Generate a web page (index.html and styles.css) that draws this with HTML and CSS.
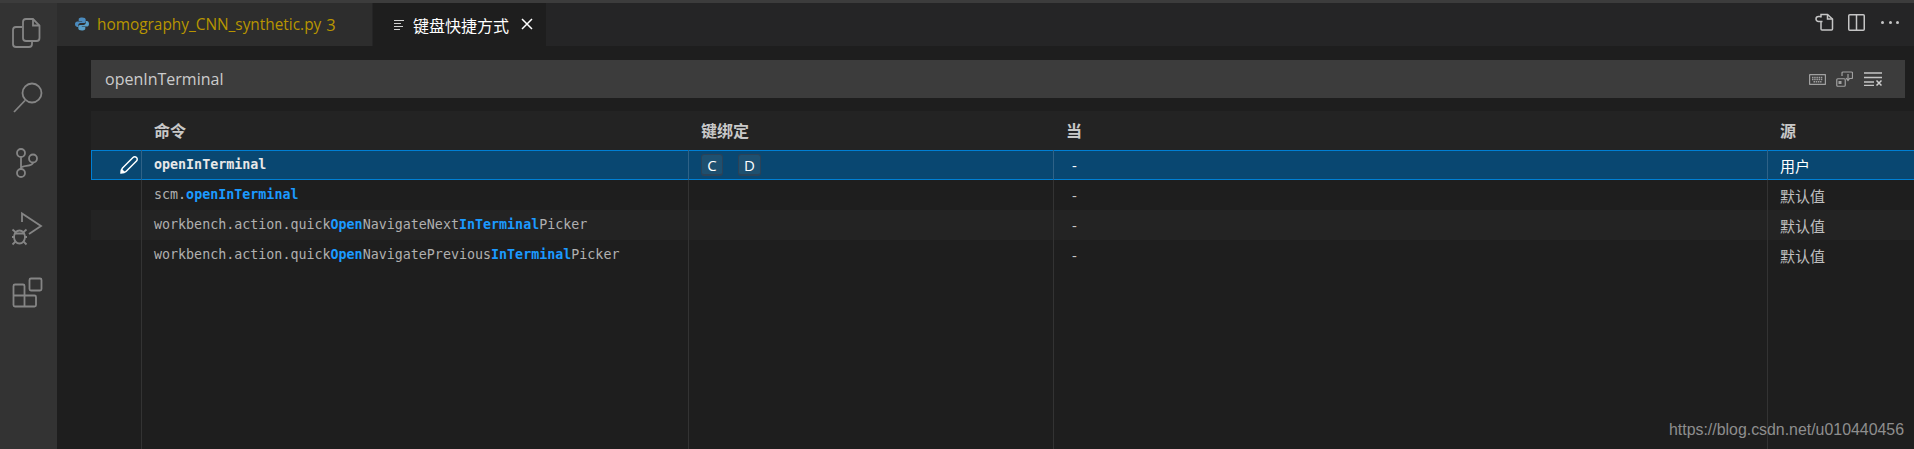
FILE: index.html
```html
<!DOCTYPE html>
<html lang="zh">
<head>
<meta charset="utf-8">
<title>键盘快捷方式</title>
<link rel="stylesheet" href="styles.css">
</head>
<body>
<div class="titlestrip"></div>
<div class="workbench">
  <nav class="activity">
    <svg class="act first" viewBox="0 3 57 62"><path d="M22 27h-6a3 3 0 0 0-3 3v14a3 3 0 0 0 3 3h13a3 3 0 0 0 3-3v-3"/><path d="M23 38V22a3 3 0 0 1 3-3h7l6.500 6.500V38a3 3 0 0 1-3 3H26a3 3 0 0 1-3-3z"/><path d="M33 19v6.500h6.500"/></svg>
    <svg class="act" viewBox="0 65 57 65"><circle cx="32" cy="93" r="9.500"/><path d="M25 100.500 14 112"/></svg>
    <svg class="act" viewBox="0 130 57 65"><circle cx="21" cy="153" r="4"/><circle cx="33" cy="158.500" r="4"/><circle cx="21" cy="173" r="4"/><path d="M21 157v12M21 168c1-3 12-1 12-5.500"/></svg>
    <svg class="act" viewBox="0 195 57 65"><path d="M22 222v-8.500L41 226l-12 8"/><ellipse cx="19.500" cy="237" rx="5.500" ry="6.500"/><path d="M14.500 233.500h10M12.500 229.500l3.500 3M26.500 229.500l-3.500 3M12 237h3M24 237h3M12.500 244.500l3-3M26.500 244.500l-3-3"/></svg>
    <svg class="act" viewBox="0 260 57 65"><rect x="29.500" y="278.500" width="12" height="12" rx="1.500"/><path d="M24.500 295.500V286a1.500 1.500 0 0 0-1.500-1.500h-8a1.500 1.500 0 0 0-1.500 1.500v19a1.500 1.500 0 0 0 1.500 1.500h19.500a1.500 1.500 0 0 0 1.500-1.500v-8a1.500 1.500 0 0 0-1.500-1.500zM13.500 295.500h11v11"/></svg>
  </nav>
  <main class="editor">
    <header class="tabbar">
      <div class="tab tab-file">
        <svg class="py" viewBox="0 0 14 14"><path class="py-a" d="M7 .5C4 .5 3.700 1.600 3.700 2.500v1.400h3.500v.6H2.300C1 4.500 0 5.500 0 7.100c0 1.700.9 2.800 2.200 2.800h1V8.300c0-1.200 1-2.300 2.300-2.300H9c1 0 1.700-.8 1.700-1.800V2.500C10.700 1.200 9.500.5 7 .5z"/><path class="py-b" d="M7 13.500c3 0 3.300-1.100 3.300-2v-1.400H6.800v-.6h4.900c1.300 0 2.300-1 2.300-2.600 0-1.700-.9-2.800-2.200-2.800h-1v1.600c0 1.200-1 2.300-2.300 2.300H5c-1 0-1.700.8-1.700 1.800v1.700c0 1.300 1.200 2 3.700 2z"/></svg>
        <span class="tab-name">homography_CNN_synthetic.py</span>
        <span class="tab-count">3</span>
      </div>
      <div class="tab tab-active">
        <svg class="lines" viewBox="0 0 10 12"><path d="M0 1.500h10M0 4.500h7M0 7.500h9M0 10.500h6"/></svg>
        <span class="tab-title">键盘快捷方式</span>
        <svg class="close" viewBox="0 0 14 14"><path d="M2 2l10 10M12 2 2 12"/></svg>
      </div>
      <div class="tab-actions">
        <svg class="ta ta-open" viewBox="0 0 20 18"><path d="M6 4.500V1.500h6.500l5 4.500v10a1 1 0 0 1-1 1H7a1 1 0 0 1-1-1V8"/><path d="M12.500 1.500V6h5"/><path d="M7.500 8.500H3.500a2.500 2.500 0 0 1 0-5H6"/></svg>
        <svg class="ta ta-split" viewBox="0 0 17 17"><rect x=".75" y=".75" width="15.500" height="15.500" rx="1"/><path d="M8.500 1v15"/></svg>
        <div class="dots"><i></i><i></i><i></i></div>
      </div>
    </header>
    <section class="keys">
      <div class="searchbox">
        <span class="query">openInTerminal</span>
        <div class="search-actions">
          <svg class="sa sa-kb" viewBox="0 0 17 11"><rect x=".5" y=".5" width="16" height="10" rx="1"/><path d="M3 3.500h11M3 5.500h11M4.500 7.800h8" stroke-dasharray="1.500 .7"/></svg>
          <svg class="sa sa-rec" viewBox="0 0 17 16"><rect x=".75" y="7.750" width="8.500" height="7.500" rx="1"/><rect x="2.500" y="10" width="3" height="3" class="solid"/><path d="M6 5V2a1 1 0 0 1 1-1h8.500a1 1 0 0 1 1 1v4.500a1 1 0 0 1-1 1H14"/><path d="M12 3v6M10 7l2 2.500L14 7"/></svg>
          <svg class="sa sa-clear" viewBox="0 0 18 14"><path d="M0 1h18M0 5.500h18M0 10h10M0 13.500h10"/><path class="x" d="M12.500 8.500l5 5M17.500 8.500l-5 5"/></svg>
        </div>
      </div>
      <div class="table">
        <div class="row head">
          <div class="cell"></div>
          <div class="cell">命令</div>
          <div class="cell">键绑定</div>
          <div class="cell">当</div>
          <div class="cell">源</div>
        </div>
        <div class="row selected">
          <div class="cell c-act"><svg class="pencil" viewBox="0 0 20 20"><path d="M2 18c0-2 .5-4 1.500-5L14 2.500a2.300 2.300 0 0 1 3.500 3.500L7 16.500C6 17.500 4 18 2 18z"/><path class="pen-fill" d="M2 18c0-1.500.3-3 1-4l3 3c-1 .7-2.500 1-4 1z"/></svg></div>
          <div class="cell c-cmd"><b>openInTerminal</b></div>
          <div class="cell c-key"><kbd>C</kbd><kbd>D</kbd></div>
          <div class="cell c-when">-</div>
          <div class="cell c-src">用户</div>
        </div>
        <div class="row">
          <div class="cell"></div>
          <div class="cell c-cmd">scm.<b>openInTerminal</b></div>
          <div class="cell c-key"></div>
          <div class="cell c-when">-</div>
          <div class="cell c-src">默认值</div>
        </div>
        <div class="row alt">
          <div class="cell"></div>
          <div class="cell c-cmd">workbench.action.quick<b>Open</b>NavigateNext<b>InTerminal</b>Picker</div>
          <div class="cell c-key"></div>
          <div class="cell c-when">-</div>
          <div class="cell c-src">默认值</div>
        </div>
        <div class="row">
          <div class="cell"></div>
          <div class="cell c-cmd">workbench.action.quick<b>Open</b>NavigatePrevious<b>InTerminal</b>Picker</div>
          <div class="cell c-key"></div>
          <div class="cell c-when">-</div>
          <div class="cell c-src">默认值</div>
        </div>
        <div class="row filler">
          <div class="cell"></div>
          <div class="cell"></div>
          <div class="cell"></div>
          <div class="cell"></div>
          <div class="cell"></div>
        </div>
      </div>
    </section>
  </main>
</div>
<div class="watermark">https://blog.csdn.net/u010440456</div>
</body>
</html>
```
FILE: styles.css
```css
* { box-sizing: border-box; }
html, body { height: 100%; }
body {
  margin: 0;
  overflow: hidden;
  background: #1e1e1e;
  color: #cccccc;
  font-family: "Open Sans", "Noto Sans CJK SC", sans-serif;
  display: flex;
  flex-direction: column;
}
.titlestrip { height: 3px; background: #3c3c3c; flex: none; }
.workbench { flex: 1; display: flex; min-height: 0; }

.activity { width: 57px; flex: none; background: #333333; display: flex; flex-direction: column; }
.act { width: 57px; height: 65px; display: block; fill: none; stroke: #858585; stroke-width: 1.800; }
.act.first { height: 62px; }

.editor { flex: 1; min-width: 0; display: flex; flex-direction: column; }
.tabbar { height: 43px; flex: none; background: #252526; display: flex; align-items: stretch; }
.tab { display: flex; align-items: center; }
.tab-file { width: 315px; background: #2d2d2d; padding-left: 18px; margin-right: 1px; font-size: 15.400px; color: #b89500; }
.py { width: 14px; height: 14px; margin-right: 8px; margin-top: -2px; }
.py-a { fill: #4b8bbe; }
.py-b { fill: #5a9fc7; }
.tab-count { margin-left: 5px; font-size: 16.500px; }
.tab-active { width: 173px; background: #1e1e1e; padding-left: 21px; color: #ffffff; font-size: 16px; }
.lines { width: 10px; height: 12px; fill: none; stroke: #d0d0d0; stroke-width: 1.200; margin-right: 9px; }
.close { width: 14px; height: 14px; margin-left: 11px; fill: none; stroke: #ffffff; stroke-width: 1.500; margin-top: -2px; }
.tab-actions { margin-left: auto; display: flex; align-items: center; padding-right: 15px; }
.ta { display: block; fill: none; stroke: #c5c5c5; stroke-width: 1.500; margin-top: -5px; }
.ta-open { width: 20px; height: 18px; margin-right: 13px; }
.ta-split { width: 17px; height: 17px; margin-right: 16px; }
.dots { display: flex; gap: 4.500px; margin-top: -5px; }
.dots i { width: 3px; height: 3px; background: #c5c5c5; border-radius: 50%; display: block; }

.keys { flex: 1; min-height: 0; display: flex; flex-direction: column; padding: 14px 0 0 34px; }
.searchbox { height: 38px; flex: none; margin-right: 9px; background: #3c3c3c; display: flex; align-items: center; padding: 0 23px 0 14px; font-size: 16px; color: #cccccc; }
.search-actions { margin-left: auto; display: flex; align-items: center; gap: 10px; }
.sa { display: block; fill: none; stroke: #a0a0a0; stroke-width: 1.200; }
.sa-kb { width: 17px; height: 11px; stroke-width: 1.400; }
.sa-rec { width: 17px; height: 16px; }
.sa-rec .solid { fill: #a0a0a0; stroke: none; }
.sa-clear { width: 18px; height: 14px; stroke: #c5c5c5; stroke-width: 1.300; margin-left: 1px; }
.sa-clear .x { stroke: #d0d0d0; stroke-width: 1.500; }

.table { flex: 1; min-height: 0; margin-top: 13px; display: flex; flex-direction: column; }
.row { display: grid; grid-template-columns: 50px 547px 365px 714px 1fr; height: 30px; flex: none; align-items: stretch; }
.cell { display: flex; align-items: center; min-width: 0; white-space: pre; }
.row > .cell:nth-child(n+2) { border-left: 1px solid #333333; }
.head { height: 39px; background: #232323; font-size: 16px; font-weight: 700; color: #c8c8c8; }
.head > .cell:nth-child(n+2) { border-left: 0; padding-left: 13px; padding-bottom: 2px; }
.selected { background: #094771; box-shadow: inset 1px 0 0 #007fd4, inset 0 1px 0 #007fd4, inset 0 -1px 0 #007fd4; color: #ffffff; }
.selected > .cell:nth-child(n+2) { border-left-color: #2f6287; }
.alt { background: #232323; }
.filler { flex: 1; height: auto; }

.c-cmd { padding-left: 12px; font-family: "DejaVu Sans Mono", monospace; font-size: 13.330px; color: #b0b0b0; padding-bottom: 2px; }
.c-cmd b { color: #1b9aff; font-weight: 700; }
.selected .c-cmd b { color: #e8e8e8; }
.c-act { justify-content: flex-end; padding-right: 2px; }
.pencil { width: 20px; height: 20px; fill: none; stroke: #ffffff; stroke-width: 1.500; }
.pen-fill { fill: #ffffff; stroke: none; }
.c-key { padding-left: 12px; gap: 15px; }
kbd {
  font-family: "Open Sans", sans-serif;
  font-size: 15px;
  width: 22px;
  height: 22px;
  display: flex;
  align-items: center;
  justify-content: center;
  background: #1e5070;
  border: 1px solid #2a4258;
  border-bottom-width: 2px;
  border-radius: 3px;
  color: #ffffff;
}
kbd + kbd { width: 23px; }
.c-when { padding-left: 18px; font-size: 15px; color: #c8c8c8; }
.selected .c-when { color: #ffffff; }
.c-src { padding-left: 12px; font-size: 15px; color: #c0c0c0; }
.selected .c-src { color: #ffffff; }

.watermark { position: absolute; right: 10px; bottom: 10px; font-family: "Liberation Sans", Arial, sans-serif; font-size: 15.900px; color: #8e8e8e; }
```
